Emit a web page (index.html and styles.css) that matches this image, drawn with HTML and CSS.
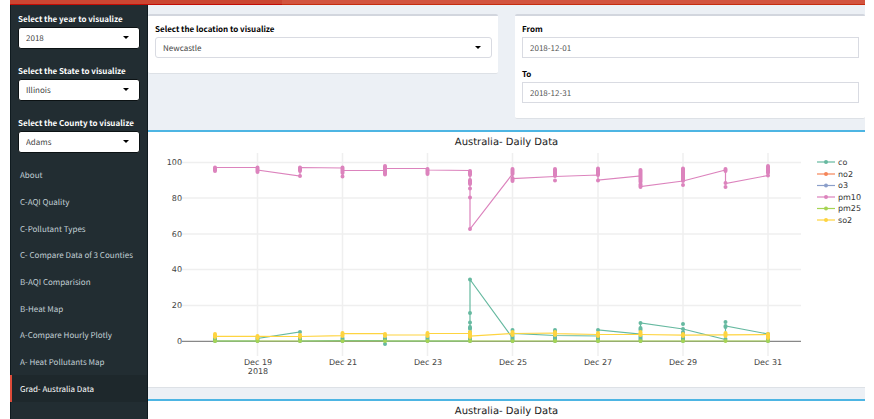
FILE: index.html
```html
<!DOCTYPE html>
<html lang="en">
<head>
<meta charset="utf-8">
<title>Air Quality Dashboard</title>
<link rel="stylesheet" href="styles.css">
</head>
<body>
<div class="app">
  <header class="topbar"><div class="topbar-logo"></div><div class="topbar-nav"></div></header>
  <div class="layout">
    <aside class="sidebar">
      <form class="filters">
        <div class="field">
          <label for="year">Select the year to visualize</label>
          <div class="select"><select id="year"><option>2018</option></select></div>
        </div>
        <div class="field">
          <label for="state">Select the State to visualize</label>
          <div class="select"><select id="state"><option>Illinois</option></select></div>
        </div>
        <div class="field">
          <label for="county">Select the County to visualize</label>
          <div class="select"><select id="county"><option>Adams</option></select></div>
        </div>
      </form>
      <nav class="menu">
        <a href="#about">About</a>
        <a href="#aqi">C-AQI Quality</a>
        <a href="#types">C-Pollutant Types</a>
        <a href="#compare">C- Compare Data of 3 Counties</a>
        <a href="#aqi-comparison">B-AQI Comparision</a>
        <a href="#heat">B-Heat Map</a>
        <a href="#hourly">A-Compare Hourly Plotly</a>
        <a href="#pollutants">A- Heat Pollutants Map</a>
        <a class="active" href="#australia">Grad- Australia Data</a>
      </nav>
    </aside>
    <main class="content">
      <div class="controls">
        <section class="box location">
          <label for="location">Select the location to visualize</label>
          <div class="select"><select id="location"><option>Newcastle</option></select></div>
        </section>
        <section class="box dates">
          <div class="field">
            <label for="from">From</label>
            <input id="from" type="text" value="2018-12-01">
          </div>
          <div class="field">
            <label for="to">To</label>
            <input id="to" type="text" value="2018-12-31">
          </div>
        </section>
      </div>
      <section class="panel">
        <h2>Australia- Daily Data</h2>
        <svg class="chart" viewBox="148 152 717 235" role="img" aria-label="Daily pollutant levels">
          <g class="grid">
            <path d="M182 162.500H801M182 198H801M182 234H801M182 269.500H801M182 305.500H801"/>
            <path d="M257.500 153V356M342.500 153V356M427.500 153V356M512.500 153V356M598 153V356M683 153V356M768 153V356"/>
          </g>
          <path class="zero" d="M182 341.300H801"/>
          <g class="ticks y">
            <text x="182" y="165">100</text><text x="182" y="201">80</text><text x="182" y="237">60</text>
            <text x="182" y="272">40</text><text x="182" y="308">20</text><text x="182" y="344">0</text>
          </g>
          <g class="ticks x">
            <text x="258" y="365">Dec 19</text><text x="258" y="374">2018</text><text x="343" y="365">Dec 21</text>
            <text x="428" y="365">Dec 23</text><text x="513" y="365">Dec 25</text><text x="598" y="365">Dec 27</text>
            <text x="683" y="365">Dec 29</text><text x="768" y="365">Dec 31</text>
          </g>
          <g class="co">
            <path class="line" d="M215 341L257.500 341V338.500L300 332V341L342.500 340.500L385 340.500V344V341H470V279.500L512.500 338V333.500L555 335.500L598 336V330L640.500 334V323L683 329L725.500 339.500V326L768 334V341"/>
            <path class="dots" d="M215 338V341M257.500 338V341M300 332h0M300 337V341M342.500 338V341M385 338V340M385 344h0M427.500 337V341M470 279.500h0M470 313h0M470 322.500h0M470 327V329M470 332V341M512.500 330h0M512.500 336V341M555 330V332M555 336V341M598 330h0M598 336V341M640.500 323h0M640.500 328V330M640.500 336V341M683 324h0M683 329h0M683 332V341M725.500 322h0M725.500 326V327M725.500 339h0M768 334V341"/>
          </g>
          <g class="pm10">
            <path class="line" d="M215 167.500H257.500V170L300 176V167.500L342.500 168V170.500H385V168.500H427.500V170L470 170.500V229L512.500 174V178.500L555 176.500L598 175V180L640.500 176V186.500L683 181L725.500 170V183.500L768 175.500"/>
            <path class="dots" d="M215 167.500V171M257.500 167.500V172M300 167.500V171M300 176h0M342.500 167.500V173M342.500 176.500h0M385 166V174.500M427.500 169V174M470 171V175M470 180V184M470 188.500h0M470 197.500h0M470 229h0M512.500 169V174M512.500 178V181M555 169V176M555 180.500h0M598 168.500V175M598 180.500h0M640.500 170V182M640.500 184V187M683 168.500V181M683 185h0M725.500 169V171M725.500 183h0M725.500 187h0M768 166V173M768 175.500h0"/>
          </g>
          <g class="pm25">
            <path class="line" d="M215 341H768"/>
            <path class="dots" d="M215 341h0M257.500 341h0M300 341h0M342.500 341h0M385 341h0M427.500 341h0M470 341h0M512.500 341h0M555 341h0M598 341h0M640.500 341h0M683 341h0M725.500 341h0M768 341h0"/>
          </g>
          <g class="so2">
            <path class="line" d="M215 336.300L257.500 336.300L300 336.500L342.500 335.700V333.700H385V335H427.500V333.500H470V336L512.500 333.500L555 333V333.700L598 334.500H640.500L683 335.200L768 334.500"/>
            <path class="dots" d="M215 334V337M257.500 336V338M300 335V337M342.500 333V336M385 334V336M427.500 333V336M470 332V337M512.500 332V335M555 332V335M598 333V336M640.500 332V335M683 334V336M725.500 333V336M768 334V338"/>
          </g>
          <g class="legend">
            <g class="co"><path class="line" d="M817 162H835"/><path class="dots" d="M826 162h0"/><text x="838" y="165">co</text></g>
            <g class="no2"><path class="line" d="M817 174H835"/><path class="dots" d="M826 174h0"/><text x="838" y="177">no2</text></g>
            <g class="o3"><path class="line" d="M817 185.500H835"/><path class="dots" d="M826 185.500h0"/><text x="838" y="188">o3</text></g>
            <g class="pm10"><path class="line" d="M817 197H835"/><path class="dots" d="M826 197h0"/><text x="838" y="200">pm10</text></g>
            <g class="pm25"><path class="line" d="M817 208.500H835"/><path class="dots" d="M826 208.500h0"/><text x="838" y="211">pm25</text></g>
            <g class="so2"><path class="line" d="M817 220H835"/><path class="dots" d="M826 220h0"/><text x="838" y="223">so2</text></g>
          </g>
        </svg>
      </section>
      <section class="panel">
        <h2>Australia- Daily Data</h2>
      </section>
    </main>
  </div>
</div>
</body>
</html>
```
FILE: styles.css
```css
* { box-sizing: border-box; }
body {
  margin: 0;
  background: #fff;
  font-family: "Noto Sans CJK SC", "Noto Sans", sans-serif;
  font-size: 8px;
  line-height: 14px;
  color: #000;
  text-rendering: geometricPrecision;
}
.app {
  display: flex;
  flex-direction: column;
  height: 100vh;
  padding: 0 9px 0 10px;
  overflow: hidden;
}
.topbar { display: flex; flex: none; height: 5px; }
.topbar-logo { width: 272px; background: #cb4632; border-bottom: 1px solid #c30c05; }
.topbar-nav { flex: 1; background: #d2543f; border-bottom: 1px solid #c52d0f; }
.layout { display: flex; flex: 1; min-height: 0; }

.sidebar {
  flex: none;
  width: 138px;
  background: #222d32;
  border-left: 1px solid #101b20;
  border-right: 1px solid #101b20;
}
.filters {
  display: flex;
  flex-direction: column;
  gap: 16px;
  padding: 8px 7px 0;
  color: #fff;
}
label { display: block; font-weight: 700; }
.select { position: relative; }
.select::after {
  content: "";
  position: absolute;
  top: 9px;
  right: 11px;
  border: 3px solid transparent;
  border-top-color: #000;
  border-bottom: 0;
}
select, input {
  display: block;
  width: 100%;
  height: 21px;
  margin: 0;
  padding: 2px 7px 0;
  font: inherit;
  color: #555;
  background: #fff;
  border: 1px solid #d9dbe2;
  border-radius: 0;
  appearance: none;
  text-rendering: inherit;
}
select { border-radius: 3px; color: #444; }
.filters select { height: 22px; border-color: #0c1214; }
.menu {
  display: grid;
  grid-template-rows: repeat(9, 1fr);
  height: 240px;
  margin: 9px 0 0 -1px;
}
.menu a {
  display: flex;
  align-items: center;
  padding: 2px 0 0 8px;
  border-left: 2px solid transparent;
  color: #c2d0d6;
  font-weight: 400;
  text-decoration: none;
}
.menu .active { color: #fff; background: #1e282c; border-left-color: #dd4b39; }

.content {
  display: flex;
  flex: 1;
  flex-direction: column;
  min-width: 0;
  background: #ecf0f5;
}
.controls {
  display: grid;
  grid-template-columns: 350fr 350fr;
  gap: 17px;
  align-items: start;
  padding: 9px 0 11px;
}
.box {
  padding: 7px 6px 15px 7px;
  background: #fff;
  border-top: 2px solid #d2d6de;
  border-bottom: 1px solid #dde1e6;
  border-radius: 2px;
}
.dates { display: grid; gap: 10px; }
.panel {
  flex: none;
  margin-bottom: 11px;
  background: #fff;
  border-top: 2px solid #4db5e3;
  border-bottom: 1px solid #dde1e6;
}
.panel h2 {
  margin: 0;
  padding: 3px 0 1px;
  font: 400 10px/16px "DejaVu Sans", sans-serif;
  color: #222;
  text-align: center;
}
.chart { display: block; width: 100%; font: 8px "DejaVu Sans", sans-serif; }
.grid path { stroke: #efefef; stroke-width: 1.500; }
.zero { stroke: #888; stroke-width: 1.200; }
.ticks { fill: #444; }
.y { text-anchor: end; }
.x { text-anchor: middle; }
.legend text { fill: #333; }
.line { fill: none; stroke: currentColor; stroke-width: 1.200; }
.dots { fill: none; stroke: currentColor; stroke-width: 4; stroke-linecap: round; }
.co { color: #66b9a0; }
.no2 { color: #f58559; }
.o3 { color: #8b9fca; }
.pm10 { color: #dc83bd; }
.pm25 { color: #a6d454; }
.so2 { color: #fed440; }
```
